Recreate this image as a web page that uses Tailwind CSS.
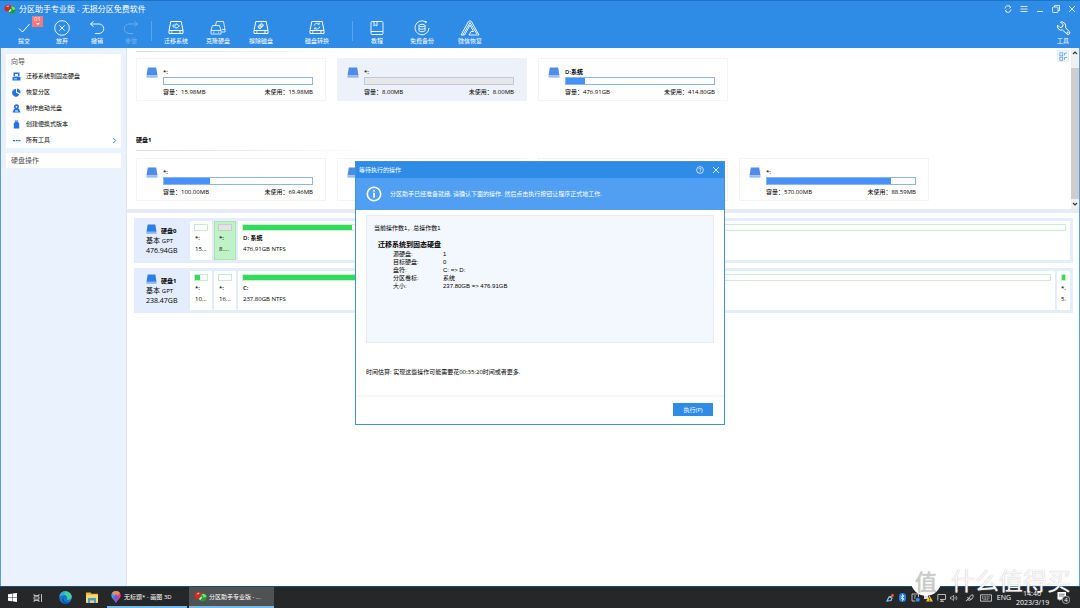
<!DOCTYPE html>
<html lang="zh-CN">
<head>
<meta charset="utf-8">
<title>分区助手专业版 - 无损分区免费软件</title>
<script src="https://cdn.jsdelivr.net/npm/@tailwindcss/browser@4"></script>
</head>
<body class="relative flex h-screen flex-col overflow-hidden bg-white font-['Open_Sans','Noto_Sans_CJK_SC',sans-serif] text-[6px] leading-[8px] text-black">

<svg class="hidden">
  <symbol id="drive" viewBox="0 0 12 11">
    <path d="M1.8 0.5h8.4l1.3 8h-11z" fill="currentColor"/>
    <path d="M0.5 9.2h11v1.3h-11z" fill="currentColor" opacity=".75"/>
  </symbol>
  <symbol id="tooldrive" viewBox="0 0 16 15">
    <g fill="none" stroke="currentColor" stroke-width="1">
      <path d="M2.8 1.5h10.4l1.8 9H1z"/><path d="M1 10.5h14v3H1z"/><path d="M3 12h1.5M11 12h2"/>
    </g>
  </symbol>
  <symbol id="logo" viewBox="0 0 12 12">
    <ellipse cx="7.800" cy="7" rx="3.900" ry="3.500" fill="#1f9c3c"/>
    <path d="M7 3.600a3.900 3.500 0 0 1 4.600 2.600L9 7z" fill="#7fe069"/>
    <path d="M.4 5.500C.4 3.200 2.400 1.800 4.600 1.800c1.500 0 2.600.8 2.800 2L5.800 5.200l.4 1.600-2.700 1.800C1.500 8.600.4 7.300.4 5.500z" fill="#d42a25"/>
    <path d="M2 4C2.600 2.900 3.800 2.300 5.200 2.500L4.500 4z" fill="#f7a195"/>
    <path d="M4.500 8.300 6.800 6l.9.800-1.900 2.400z" fill="#d8f5d2"/>
  </symbol>
</svg>

<header class="flex h-12 shrink-0 flex-col border-t border-[#1a75c6] bg-[#2e8be6] text-white">
  <div class="flex h-[15px] items-center px-1">
    <svg class="size-3" aria-hidden="true"><use href="#logo"/></svg>
    <h1 class="ml-[3px] text-[8px] leading-[12px]">分区助手专业版 - 无损分区免费软件</h1>
    <div class="ml-auto flex items-center gap-2">
      <button aria-label="刷新"><svg class="size-2" viewBox="0 0 8 8" fill="none" stroke="#fff" stroke-width=".8"><path d="M1 3.500A3 3 0 0 1 6.500 2M7 4.500A3 3 0 0 1 1.500 6M5 .8l1.700 1.300L5.500 3.400M3 7.200 1.300 5.900l1.200-1.300"/></svg></button>
      <button aria-label="菜单"><svg class="size-2" viewBox="0 0 8 8" stroke="#fff" stroke-width=".8"><path d="M.5 1.500h7M.5 4h7M.5 6.500h7"/></svg></button>
      <button aria-label="最小化"><svg class="size-2" viewBox="0 0 8 8" stroke="#fff" stroke-width=".8"><path d="M1 6.500h6"/></svg></button>
      <button aria-label="还原"><svg class="size-2" viewBox="0 0 8 8" fill="none" stroke="#fff" stroke-width=".8"><rect x=".5" y="2" width="5.500" height="5.500" rx=".8"/><path d="M2.500 2V.5h5V5.500H6"/></svg></button>
      <button aria-label="关闭"><svg class="size-2" viewBox="0 0 8 8" stroke="#fff" stroke-width=".8"><path d="M1 1l6 6M7 1 1 7"/></svg></button>
    </div>
  </div>
  <nav class="flex flex-1 items-start pr-[9px]">
    <button class="relative ml-2 flex w-8 flex-col items-center gap-px pt-1">
      <svg class="size-4" viewBox="0 0 16 16" fill="none" stroke="#fff"><path d="M3 8.500l3.500 3.500 7-8"/></svg><span>提交</span>
      <span class="absolute top-0 right-[-3px] flex h-[11px] w-[11px] flex-col items-center bg-[#f6777b] text-[6px] leading-[7px]">01<svg class="h-[3px] w-[4px]" viewBox="0 0 4 3"><path d="M0 0h4L2 2z" fill="#fff"/></svg></span>
    </button>
    <button class="ml-[6px] flex w-8 flex-col items-center gap-px pt-1">
      <svg class="size-4" viewBox="0 0 16 16" fill="none" stroke="#fff" stroke-width=".9"><circle cx="8" cy="8" r="7.300"/><path d="M5.300 5.300l5.400 5.400M10.700 5.300l-5.400 5.400"/></svg><span>放弃</span>
    </button>
    <button class="ml-[3px] flex w-8 flex-col items-center gap-px pt-1">
      <svg class="size-4" viewBox="0 0 16 16" fill="none" stroke="#fff" stroke-width=".9"><path d="M4.500 1.500 1.500 4l3 2.500M1.500 4H10a4.600 4.600 0 0 1 0 9.500H6"/></svg><span>撤销</span>
    </button>
    <button disabled class="ml-[2px] flex w-8 flex-col items-center gap-px pt-1 text-[#72b0ef]">
      <svg class="size-4" viewBox="0 0 16 16" fill="none" stroke="currentColor" stroke-width=".9"><path d="M11.500 1.500l3 2.500-3 2.500M14.500 4H6a4.600 4.600 0 0 0 0 9.500h4"/></svg><span>重做</span>
    </button>
    <div class="ml-[4px] mt-[5px] h-5 w-px bg-[#5ba5ed]"></div>
    <button class="ml-[4px] flex w-10 flex-col items-center gap-px pt-1">
      <svg class="size-4" viewBox="0 0 16 16" fill="none" stroke="#fff" stroke-width=".8"><use href="#tooldrive" width="16" height="15"/><path d="M5 5h3V3.500l3.500 2.500L8 8.500V7H5z"/></svg><span>迁移系统</span>
    </button>
    <button class="ml-[2px] flex w-10 flex-col items-center gap-px pt-1">
      <svg class="size-4" viewBox="0 0 16 16" fill="none" stroke="#fff" stroke-width=".8"><path d="M5.500 5.500 6.500 1.500h7l1.500 8v2.500h-3.500M1 10.500 2.500 5.500h7l1.500 5v3.500H1zM1 10.500h10M12 9.500h3M3 12.200h1.500M8 12.200h1"/></svg><span>克隆硬盘</span>
    </button>
    <button class="ml-[3px] flex w-10 flex-col items-center gap-px pt-1">
      <svg class="size-4" viewBox="0 0 16 16" fill="none" stroke="#fff" stroke-width=".8"><use href="#tooldrive" width="16" height="15"/><path d="M5 6.500 8.500 3.300l2.300 2L7.500 8.500H6zM6.500 5l2.300 2.200" fill="#fff" fill-opacity=".5"/></svg><span>擦除磁盘</span>
    </button>
    <button class="ml-[16px] flex w-10 flex-col items-center gap-px pt-1">
      <svg class="size-4" viewBox="0 0 16 16" fill="none" stroke="#fff" stroke-width=".8"><use href="#tooldrive" width="16" height="15"/><path d="M5.300 5.500A2.800 2.800 0 0 1 10 4M10.700 6.500A2.800 2.800 0 0 1 6 8.300M10.300 2.600V4.300H8.700M5.700 9.500V7.900h1.700"/></svg><span>磁盘转换</span>
    </button>
    <div class="ml-[15px] mt-[5px] h-5 w-px bg-[#5ba5ed]"></div>
    <button class="ml-[4px] flex w-10 flex-col items-center gap-px pt-1">
      <svg class="size-4" viewBox="0 0 16 16" fill="none" stroke="#fff" stroke-width=".9"><rect x="2" y="1.500" width="12" height="13" rx="1"/><path d="M2 11.500h12M5 1.500v4.500l1.500-1L8 6V1.500"/></svg><span>教程</span>
    </button>
    <button class="ml-[5px] flex w-10 flex-col items-center gap-px pt-1">
      <svg class="size-4" viewBox="0 0 16 16" fill="none" stroke="#fff" stroke-width=".9"><path d="M11 1.500A7 7 0 1 0 15 8"/><circle cx="11.800" cy="2" r=".7" fill="#fff"/><ellipse cx="8" cy="5.500" rx="3" ry="1.200"/><path d="M5 5.500v5c0 1.600 6 1.600 6 0v-5M5 8c0 1.600 6 1.600 6 0"/></svg><span>免费备份</span>
    </button>
    <button class="ml-[8px] flex w-10 flex-col items-center gap-px pt-1">
      <svg class="h-4 w-5" viewBox="0 0 20 16" fill="none" stroke="#fff" stroke-width=".9" stroke-linejoin="round"><path d="M1 15 8.500 1.500Q10 0 11.500 1.500L19 15H9l2-3.500h2.500L10 5 4.500 15z"/><path d="M2.800 15 10 2.500 17 14"/></svg><span>微信恢复</span>
    </button>
    <button class="ml-auto flex flex-col items-center gap-px pt-1">
      <svg class="size-4" viewBox="0 0 16 16" fill="none" stroke="#fff" stroke-width="1"><path d="M5.500 2 8 4.500 7.500 7 5 7.500 2.500 5A4 4 0 0 0 7.500 10l4.500 4a1.600 1.600 0 0 0 2.300-2.300L10.500 7.500A4.200 4.200 0 0 0 5.500 2z"/><circle cx="12.700" cy="12.500" r=".5"/></svg><span>工具</span>
    </button>
  </nav>
</header>

<div class="flex min-h-0 flex-1 border-x border-[#5a9fdc]">
  <aside class="flex w-[126px] shrink-0 flex-col gap-[5px] border-r border-[#dfe6f2] bg-[#eaf2fe] px-[5px] pt-[6px]">
    <section class="bg-white pt-[3px]">
      <h2 class="pb-px pl-[5px] text-[7px] leading-[10px] text-[#555]">向导</h2>
      <ul class="text-[6px]">
        <li><a href="#" class="flex h-4 items-center gap-[5px] pl-[6px]"><svg class="size-[9px] text-[#2272e0]" viewBox="0 0 9 9" fill="currentColor"><path d="M1.500.5h6v4h-6z"/><path d="M.5 5h8v3.500h-8z"/><path d="M3 2h3v2H3zM2 6.500h3v.8H2z" fill="#fff"/></svg>迁移系统到固态硬盘</a></li>
        <li><a href="#" class="flex h-4 items-center gap-[5px] pl-[6px]"><svg class="size-[9px] text-[#2272e0]" viewBox="0 0 9 9" fill="currentColor"><path d="M4 1v3.500l3.300 2A3.800 3.800 0 1 1 4 1z"/><path d="M5 .5a3.700 3.700 0 0 1 3.200 5L5 3.800z"/></svg>恢复分区</a></li>
        <li><a href="#" class="flex h-4 items-center gap-[5px] pl-[6px]"><svg class="size-[9px] text-[#2272e0]" viewBox="0 0 9 9" fill="currentColor"><circle cx="4.500" cy="2.800" r="2.500"/><path d="M.5 8.500 2 5h5l1.500 3.500z"/><circle cx="4.500" cy="2.800" r=".9" fill="#fff"/><path d="M3 6.500h3v1H3z" fill="#fff"/></svg>制作启动光盘</a></li>
        <li><a href="#" class="flex h-4 items-center gap-[5px] pl-[6px]"><svg class="size-[9px] text-[#2272e0]" viewBox="0 0 9 9" fill="currentColor"><path d="M2.800.5h3.400V3H2.800zM1.800 2.800h5.400v5.700H1.800z"/><path d="M3.700 1.300h.6v.8h-.6zM4.900 1.300h.6v.8h-.6z" fill="#fff"/></svg>创建便携式版本</a></li>
        <li><a href="#" class="flex h-4 items-center gap-[5px] pl-[6px]"><svg class="size-[9px] text-[#2272e0]" viewBox="0 0 9 9" fill="currentColor"><path d="M1 4h2v1.200H1zM3.700 4h2v1.200h-2zM6.400 4h2v1.200h-2z"/></svg>所有工具<svg class="mr-[3px] ml-auto size-[7px]" viewBox="0 0 7 7" fill="none" stroke="#2e8be6"><path d="M2.200 1l2.500 2.500L2.200 6"/></svg></a></li>
      </ul>
    </section>
    <section class="bg-white pt-[3px] pb-[2px]">
      <h2 class="pl-[5px] text-[7px] leading-[10px] text-[#555]">硬盘操作</h2>
    </section>
  </aside>

  <main class="flex min-w-0 flex-1 flex-col">
    <section class="flex h-[161px] shrink-0">
      <div class="min-w-0 flex-1 pl-[9px]">
        <div class="mt-[3px] h-px w-[220px] bg-linear-to-r from-[#ddd] to-white"></div>
        <div class="mt-[6px] flex gap-[11px]">
          <article class="flex h-[43px] w-[190px] shrink-0 gap-[5px] border border-[#f3f4f6] pt-2 pr-3 pl-[9px]">
            <svg class="h-[11px] w-3 shrink-0 text-[#4f8ce8]"><use href="#drive"/></svg>
            <div class="min-w-0 flex-1 pt-px"><h3 class="font-semibold">*:</h3><div class="mt-[1px] h-2 border border-[#90b4de] bg-white"></div>
              <p class="mt-[3px] flex justify-between"><span>容量：15.98MB</span><span>未使用：15.98MB</span></p></div>
          </article>
          <article class="flex h-[43px] w-[190px] shrink-0 gap-[5px] border border-[#edf1f9] bg-[#edf1f9] pt-2 pr-3 pl-[9px]">
            <svg class="h-[11px] w-3 shrink-0 text-[#4f8ce8]"><use href="#drive"/></svg>
            <div class="min-w-0 flex-1 pt-px"><h3 class="font-semibold">*:</h3><div class="mt-[1px] h-2 border border-[#c4cad4] bg-[#e6e7ea]"></div>
              <p class="mt-[3px] flex justify-between"><span>容量：8.00MB</span><span>未使用：8.00MB</span></p></div>
          </article>
          <article class="flex h-[43px] w-[190px] shrink-0 gap-[5px] border border-[#f3f4f6] pt-2 pr-3 pl-[9px]">
            <svg class="h-[11px] w-3 shrink-0 text-[#4f8ce8]"><use href="#drive"/></svg>
            <div class="min-w-0 flex-1 pt-px"><h3 class="font-semibold">D:系统</h3><div class="mt-[1px] h-2 border border-[#90b4de] bg-white"><div class="h-full bg-[#4591f7]" style="width:13%"></div></div>
              <p class="mt-[3px] flex justify-between"><span>容量：476.91GB</span><span>未使用：414.80GB</span></p></div>
          </article>
        </div>
        <h2 class="mt-[34px] text-[6px] leading-[10px] font-bold">硬盘1</h2>
        <div class="mt-[5px] h-px w-[240px] bg-linear-to-r from-[#ddd] to-white"></div>
        <div class="mt-[7px] flex gap-[11px]">
          <article class="flex h-[43px] w-[190px] shrink-0 gap-[5px] border border-[#f3f4f6] pt-2 pr-3 pl-[9px]">
            <svg class="h-[11px] w-3 shrink-0 text-[#4f8ce8]"><use href="#drive"/></svg>
            <div class="min-w-0 flex-1 pt-px"><h3 class="font-semibold">*:</h3><div class="mt-[1px] h-2 border border-[#90b4de] bg-white"><div class="h-full bg-[#4591f7]" style="width:31%"></div></div>
              <p class="mt-[3px] flex justify-between"><span>容量：100.00MB</span><span>未使用：69.46MB</span></p></div>
          </article>
          <article class="flex h-[43px] w-[190px] shrink-0 border border-[#f3f4f6] pt-2 pl-[9px]">
            <svg class="h-[11px] w-3 shrink-0 text-[#4f8ce8]"><use href="#drive"/></svg>
          </article>
          <article class="h-[43px] w-[190px] shrink-0 border border-[#f3f4f6]"></article>
          <article class="flex h-[43px] w-[190px] shrink-0 gap-[5px] border border-[#f3f4f6] pt-2 pr-3 pl-[9px]">
            <svg class="h-[11px] w-3 shrink-0 text-[#4f8ce8]"><use href="#drive"/></svg>
            <div class="min-w-0 flex-1 pt-px"><h3 class="font-semibold">*:</h3><div class="mt-[1px] h-2 border border-[#90b4de] bg-white"><div class="h-full bg-[#4591f7]" style="width:84%"></div></div>
              <p class="mt-[3px] flex justify-between"><span>容量：570.00MB</span><span>未使用：88.59MB</span></p></div>
          </article>
        </div>
      </div>
      <button aria-label="视图" class="mt-[2px] mr-[2px] flex size-3 items-center justify-center border border-[#e3eefb] bg-[#f3f8fe]"><svg class="size-[9px]" viewBox="0 0 9 9" fill="none" stroke="#5b9fe8" stroke-width=".8"><rect x=".8" y=".8" width="3" height="3"/><rect x=".8" y="5.200" width="3" height="3"/><path d="M5.500 3.500V1h2.700M5.500 8V5.500h2.700"/></svg></button>
      <div class="flex w-2 flex-col bg-[#f0f0f0]">
        <svg class="h-[20px] w-2" viewBox="0 0 8 20" fill="none" stroke="#333" stroke-width="1.200"><path d="M2 6l2-2 2 2"/></svg>
        <div class="flex-1 bg-[#cdcdcd]"></div>
        <svg class="h-[10px] w-2" viewBox="0 0 8 10" fill="none" stroke="#333" stroke-width="1.200"><path d="M2 4l2 2 2-2"/></svg>
      </div>
    </section>

    <div class="h-1 shrink-0 bg-[#e6ebf5]"></div>

    <section class="flex flex-col gap-[5px] pt-[5px] pr-[6px] pl-[7px]">
      <div class="flex h-[45px] gap-[2px] bg-[#e3edfd] py-[3px] pr-[3px]">
        <div class="w-[54px] pt-[2px] pl-3">
          <div class="flex items-center gap-1 font-bold"><svg class="h-[10px] w-[11px] text-[#2f7ee6]" viewBox="0 0 12 11"><use href="#drive"/></svg><span class="pt-1">硬盘0</span></div>
          <p class="pt-px text-[7px] leading-[10px]">基本 <span class="text-[6px]">GPT</span></p><p class="text-[7px] leading-[10px]">476.94GB</p>
        </div>
        <div class="w-[22px] bg-white px-[4px] pt-[3px]"><div class="h-[7px] border border-[#c6ebce]"></div><p class="mt-[3px] pl-px font-semibold">*:</p><p class="mt-[3px] pl-px whitespace-nowrap">15...</p></div>
        <div class="w-[22px] border border-[#a9e3b2] bg-[#bff3c5] px-[3px] pt-[2px]"><div class="h-[7px] border border-[#c5cfc8] bg-[#e2e3e6]"></div><p class="mt-[3px] pl-px font-semibold">*:</p><p class="mt-[3px] pl-px whitespace-nowrap">8....</p></div>
        <div class="flex-1 bg-white px-[4px] pt-[3px]"><div class="h-[7px] border border-[#cdecd4]"><div class="h-full bg-[#2fdc5c]" style="width:13.200%"></div></div><p class="mt-[3px] pl-px font-semibold">D: 系统</p><p class="mt-[3px] pl-px">476.91GB NTFS</p></div>
      </div>
      <div class="flex h-[45px] gap-[2px] bg-[#e3edfd] py-[3px] pr-[3px]">
        <div class="w-[54px] pt-[2px] pl-3">
          <div class="flex items-center gap-1 font-bold"><svg class="h-[10px] w-[11px] text-[#2f7ee6]" viewBox="0 0 12 11"><use href="#drive"/></svg><span class="pt-1">硬盘1</span></div>
          <p class="pt-px text-[7px] leading-[10px]">基本 <span class="text-[6px]">GPT</span></p><p class="text-[7px] leading-[10px]">238.47GB</p>
        </div>
        <div class="w-[22px] bg-white px-[4px] pt-[3px]"><div class="h-[7px] border border-[#c6ebce]"><div class="h-full bg-[#2fdc5c]" style="width:40%"></div></div><p class="mt-[3px] pl-px font-semibold">*:</p><p class="mt-[3px] pl-px whitespace-nowrap">10...</p></div>
        <div class="w-[22px] bg-white px-[4px] pt-[3px]"><div class="h-[7px] border border-[#c6ebce]"></div><p class="mt-[3px] pl-px font-semibold">*:</p><p class="mt-[3px] pl-px whitespace-nowrap">16...</p></div>
        <div class="flex-1 bg-white px-[4px] pt-[3px]"><div class="h-[7px] border border-[#cdecd4]"><div class="h-full bg-[#2fdc5c]" style="width:40%"></div></div><p class="mt-[3px] pl-px font-semibold">C:</p><p class="mt-[3px] pl-px">237.80GB NTFS</p></div>
        <div class="w-[13px] bg-white px-[4px] pt-[3px]"><div class="h-[7px] border border-[#c6ebce] bg-[#2fdc5c]"></div><p class="mt-[3px] font-semibold whitespace-nowrap">*.</p><p class="mt-[3px] whitespace-nowrap">5.</p></div>
      </div>
    </section>
  </main>
</div>

<footer class="flex h-[22px] shrink-0 items-stretch border-t border-[#1c4b74] bg-[#262729] text-[6px] text-white">
  <button aria-label="开始" class="flex w-[25px] items-center justify-center"><svg class="size-[9px]" viewBox="0 0 9 9" fill="#fff"><path d="M0 1.300 4 .7v3.500H0zM4.500.6 9 0v4.200H4.500zM0 4.700h4v3.500L0 7.700zM4.500 4.700H9V9l-4.500-.7z"/></svg></button>
  <button aria-label="任务视图" class="flex w-[25px] items-center justify-center"><svg class="size-[10px]" viewBox="0 0 10 10" fill="none" stroke="#ddd" stroke-width=".8"><path d="M1 1v1.500h5V1M1 9V7.500h5V9M1 3.800h5v2.400H1zM8.500 1v8M8 3.500h1"/></svg></button>
  <button aria-label="Edge" class="flex w-[30px] items-center justify-center"><svg class="size-[13px]" viewBox="0 0 13 13"><circle cx="6.500" cy="6.500" r="6.300" fill="#1578cf"/><path d="M.4 5.500C1 2 3.500.2 6.500.2c3.500 0 6.300 2.600 6.300 5.600 0 2-1.600 3-3.300 3C8 8.800 7.700 8.300 8 7.800 9 6 7.300 4 5 4 2.800 4 1 5 .4 5.500z" fill="#41cfa0"/><path d="M.4 5.500C1 2 3.500.2 6.500.2L5 4C2.800 4 1 5 .4 5.500z" fill="#2fa8e0"/><path d="M5 6c-1.500 2.500 0 5.500 3.500 5.500 1.500 0 2.700-.6 3.500-1.500-1.700 3-5 3.300-7 2C2.500 10.500 2.500 7 5 6z" fill="#0d4f9e"/></svg></button>
  <button aria-label="文件资源管理器" class="flex w-[23px] items-center justify-center"><svg class="h-[11px] w-3" viewBox="0 0 12 11"><path d="M0 .5h4.500l1 1.200H12v9H0z" fill="#f3b93b"/><path d="M0 3h12v7.700H0z" fill="#fcd871"/><path d="M2 6h8v4.700H8V8.500H4v2.200H2z" fill="#3f9be8"/></svg></button>
  <button class="ml-1 flex w-20 items-center gap-[3px] border-b-2 border-[#76b9ed] pl-1 text-[6px]"><svg class="h-3 w-[10px] shrink-0" viewBox="0 0 10 12"><path d="M5 12C4 9 0 7.500.3 4 .5 1.500 2.500 0 5 0z" fill="#2ba9ee"/><path d="M5 12c1-3 5-4.500 4.700-8C9.500 1.500 7.500 0 5 0z" fill="#e2497c"/><path d="M1 2C2 .7 3.300 0 5 0s3 .7 4 2L5 6z" fill="#f28e48"/><path d="M5 3 2 6.500 5 12l3-5.500z" fill="#8a52d8"/></svg>无标题* - 画图 3D</button>
  <button class="ml-[2px] flex w-[85px] items-center gap-[2px] border-b-2 border-[#76b9ed] bg-[#505153] pl-[5px] text-[6px]"><svg class="size-[13px] shrink-0" viewBox="0 0 12 12"><use href="#logo"/></svg>分区助手专业版 - ...</button>
  <div class="ml-auto flex items-center">
    <svg class="size-2" viewBox="0 0 8 8"><path d="M1 7l2-4 3 1-1 2.500zM3 3l3-1" fill="none" stroke="#8fc5ef" stroke-width="1.200"/><circle cx="6.500" cy="1.500" r="1.400" fill="#f25a2a"/></svg>
    <svg class="ml-[5px] h-[9px] w-[7px]" viewBox="0 0 7 9"><rect width="7" height="9" rx="3.500" fill="#1f86e8"/><path d="M1.800 3l3.200 3-1.500 1.500v-6L5 3 1.800 6" fill="none" stroke="#fff" stroke-width=".7"/></svg>
    <svg class="ml-[5px] size-[9px]" viewBox="0 0 9 9" fill="none" stroke="#ddd" stroke-width=".8"><path d="M1 1h6.500v3M1 1v7h3.500M3 3h2M3 5h1.500"/><circle cx="6.800" cy="6.800" r="2" fill="#3a8de0" stroke="none"/></svg>
    <svg class="ml-[4px] size-[9px]" viewBox="0 0 9 9"><path d="M0 2h4v4H0z" fill="#ddd"/><path d="M5.500 2.500 9 8.500H2z" fill="#fbc02d"/><path d="M5.500 4.500v2M5.500 7v.8" stroke="#222" stroke-width=".7"/></svg>
    <svg class="ml-[4px] size-[9px]" viewBox="0 0 9 9" fill="none" stroke="#ddd" stroke-width=".8"><path d="M.8 1.500h7.700v5H3M5 6.500v1.800M3 8.300h4M.8 1.500v6"/></svg>
    <svg class="ml-[4px] size-[8px]" viewBox="0 0 8 8" fill="none" stroke="#ccc" stroke-width=".7"><path d="M.5 3v2h1.300L3.500 6.700V1.300L1.800 3zM4.800 2.800q1 1.200 0 2.400M6 1.800q2 2.200 0 4.400"/></svg>
    <svg class="ml-[7px] size-[9px]" viewBox="0 0 9 9" fill="none" stroke="#ddd" stroke-width=".8"><path d="M.8 8q2-.5 3.200-3t3-3.200 1 2.400-3 1.800-3-1.500M2 6.500q3 2 4.500-.5"/></svg>
    <svg class="ml-[6px] h-2 w-3" viewBox="0 0 12 8" fill="none" stroke="#ddd" stroke-width=".8"><path d="M.5.8h11v6.400H.5z"/><path d="M2 2.800h8M2 4.200h8M3.500 5.700h5" stroke-dasharray="1 .6"/></svg>
    <span class="ml-[5px] text-[7px] leading-[10px]">ENG</span>
    <div class="ml-[5px] w-8 text-center text-[7px] leading-[9px]"><time class="block">14:46</time><time class="block">2023/3/19</time></div>
    <svg class="mr-[10px] ml-[9px] size-[13px]" viewBox="0 0 13 13"><path d="M.5 1h8.500v7.500H4L2.500 10V8.500h-2z" fill="#fff"/><path d="M2 3.200h5.500M2 5h5.500" stroke="#444" stroke-width=".7"/><circle cx="9" cy="8.800" r="3.800" fill="#333" stroke="#ddd" stroke-width=".6"/><text x="9" y="11" font-size="6" text-anchor="middle" fill="#fff">4</text></svg>
  </div>
</footer>

<section role="dialog" aria-labelledby="dlg" class="absolute top-[161px] left-[355px] flex w-[370px] flex-col border border-[#4591cf] bg-white">
  <div class="flex h-4 items-center bg-[#2e8be6] pr-1 pl-[3px] text-white">
    <h2 id="dlg">等待执行的操作</h2>
    <button aria-label="帮助" class="ml-auto"><svg class="size-2" viewBox="0 0 8 8" fill="none" stroke="#fff" stroke-width=".7"><circle cx="4" cy="4" r="3.400"/><path d="M2.900 3.200a1.100 1.100 0 1 1 1.600 1q-.5.300-.5.800M4 5.500v.7"/></svg></button>
    <button aria-label="关闭" class="ml-2"><svg class="size-2" viewBox="0 0 8 8" stroke="#fff" stroke-width=".8"><path d="M1 1l6 6M7 1 1 7"/></svg></button>
  </div>
  <div class="flex h-8 items-center gap-2 bg-[#519ff3] pl-[10px] text-white">
    <svg class="size-4" viewBox="0 0 16 16" fill="none" stroke="#fff"><circle cx="8" cy="8" r="6.700" stroke-width="1.600"/><path d="M8 6.800v5M8 4v1.600" stroke-width="1.700"/></svg>
    <p>分区助手已经准备就绪, 请确认下面的操作. 然后点击执行按钮让程序正式地工作.</p>
  </div>
  <div class="mx-[10px] mt-[5px] h-[128px] border border-[#e6eaf3] bg-[#f3f7fe] pt-2 pl-[7px] font-['Liberation_Sans','Noto_Sans_CJK_SC',sans-serif]">
    <p>当前操作数1，总操作数1</p>
    <h3 class="mt-2 pl-1 text-[7px] leading-[10px] font-bold">迁移系统到固态硬盘</h3>
    <dl class="grid grid-cols-[50px_1fr] pl-[19px] leading-[8px]">
      <dt>源硬盘:</dt><dd>1</dd>
      <dt>目标硬盘:</dt><dd>0</dd>
      <dt>盘符:</dt><dd>C: =&gt; D:</dd>
      <dt>分区卷标:</dt><dd>系统</dd>
      <dt>大小:</dt><dd>237.80GB =&gt; 476.91GB</dd>
    </dl>
  </div>
  <p class="mx-[10px] mt-[25px]">时间估算: 实现这些操作可能需要花00:35:20时间或者更多.</p>
  <div class="mt-[19px] flex justify-end border-t-2 border-[#f5f6f8] pt-[6px] pr-[11px] pb-2">
    <button class="h-[13px] w-10 bg-[#2e8be6] text-white">执行(P)</button>
  </div>
</section>

<div class="pointer-events-none absolute right-[9px] bottom-[12px] flex items-center gap-[10px] text-[24px] leading-[30px] font-normal text-white/90 [text-shadow:0_0_1px_#aaa]">
  <span class="flex size-[30px] items-center justify-center rounded-full bg-white text-[22px] text-[#ccc]">值</span>
  <span>什么值得买</span>
</div>
</body>
</html>
